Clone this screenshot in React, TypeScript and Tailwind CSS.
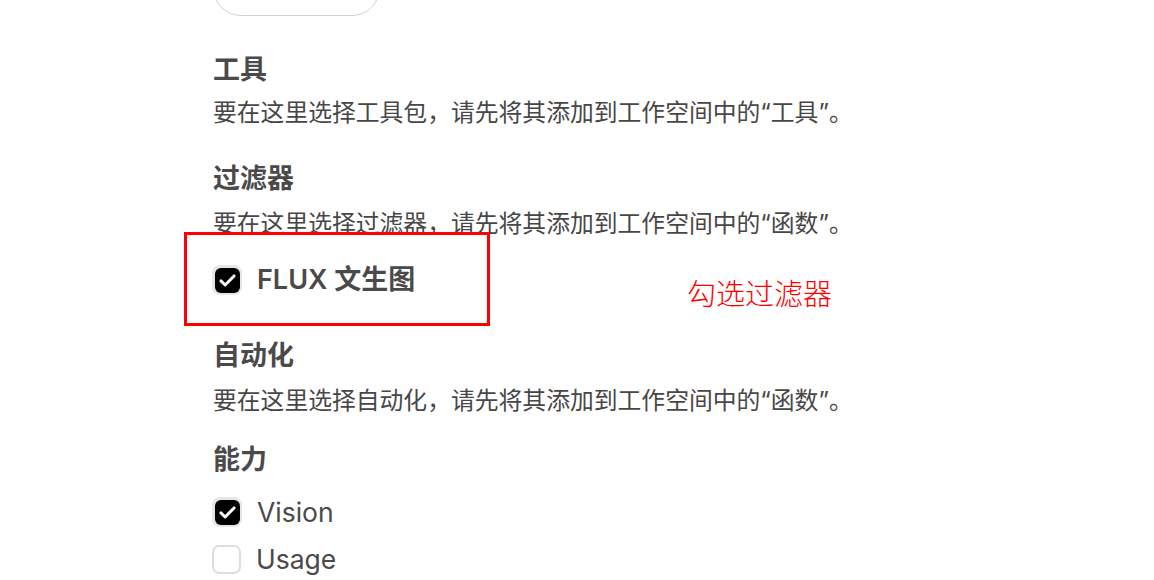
import type { ReactNode } from 'react';

const FONT = "font-['Inter','Noto_Sans_CJK_SC',sans-serif]";

function Heading({ children, className }: { children: ReactNode; className?: string }) {
  return (
    <h3 className={`text-[27px] leading-[36px] font-semibold text-[#4a4a4a] ${className ?? ''}`}>
      {children}
    </h3>
  );
}

function Hint({ children, className }: { children: ReactNode; className?: string }) {
  return (
    <p className={`text-[23.8px] leading-[32px] text-[#474747] ${className ?? ''}`}>{children}</p>
  );
}

function Checkbox({ checked }: { checked: boolean }) {
  if (!checked) {
    return (
      <span className="block h-[29px] w-[29px] shrink-0 rounded-[7px] border-2 border-[#dedede] bg-white" />
    );
  }
  return (
    <span className="flex h-[30px] w-[30px] shrink-0 items-center justify-center rounded-[8px] bg-[#e6e6e6]">
      <span className="flex h-[25px] w-[25px] items-center justify-center rounded-[6px] bg-black">
        <svg viewBox="0 0 24 24" className="h-[21px] w-[21px]" fill="none">
          <path
            d="M4.5 12.5l4.8 4.6L19.5 6.8"
            stroke="white"
            strokeWidth="3.4"
            strokeLinecap="round"
            strokeLinejoin="round"
          />
        </svg>
      </span>
    </span>
  );
}

function CheckRow({
  label,
  checked,
  bold,
  className,
}: {
  label: string;
  checked: boolean;
  bold?: boolean;
  className?: string;
}) {
  return (
    <label className={`flex h-[36px] items-center gap-[15px] ${className ?? ''}`}>
      <Checkbox checked={checked} />
      <span
        className={`leading-[36px] text-[#4a4a4a] ${bold ? 'text-[27px] font-semibold' : 'text-[26.5px] font-normal'}`}
      >
        {label}
      </span>
    </label>
  );
}

export default function App() {
  return (
    <main className={`h-[580px] w-[1154px] overflow-hidden bg-white pl-[212px] ${FONT}`}>
      {/* 上方被截断的按钮 */}
      <div className="mt-[-40px] ml-px h-[56px] w-[167px] rounded-full border border-[#d0d0d0]" />

      <Heading className="mt-[36px] pl-px">工具</Heading>
      <Hint className="mt-[9px] pl-px">要在这里选择工具包，请先将其添加到工作空间中的“工具”。</Hint>

      <Heading className="mt-[32px] pl-px">过滤器</Heading>
      <Hint className="mt-[11px] pl-px">要在这里选择过滤器，请先将其添加到工作空间中的“函数”。</Hint>

      {/* 标注：红框 + 说明 */}
      <div className="relative mt-[22px]">
        <CheckRow label="FLUX 文生图" checked bold />
        <div className="pointer-events-none absolute top-[-30px] left-[-28px] h-[94px] w-[306px] border-[3px] border-[#ff0000]" />
        <span className="absolute top-[15px] left-[475px] text-[29px] leading-[36px] font-light text-[#ff0000]">
          勾选过滤器
        </span>
      </div>

      <Heading className="mt-[40px] pl-px">自动化</Heading>
      <Hint className="mt-[11px] pl-px">要在这里选择自动化，请先将其添加到工作空间中的“函数”。</Hint>

      <Heading className="mt-[25px] pl-px">能力</Heading>
      <CheckRow label="Vision" checked className="mt-[16px]" />
      <CheckRow label="Usage" checked={false} className="mt-[11px]" />
    </main>
  );
}
